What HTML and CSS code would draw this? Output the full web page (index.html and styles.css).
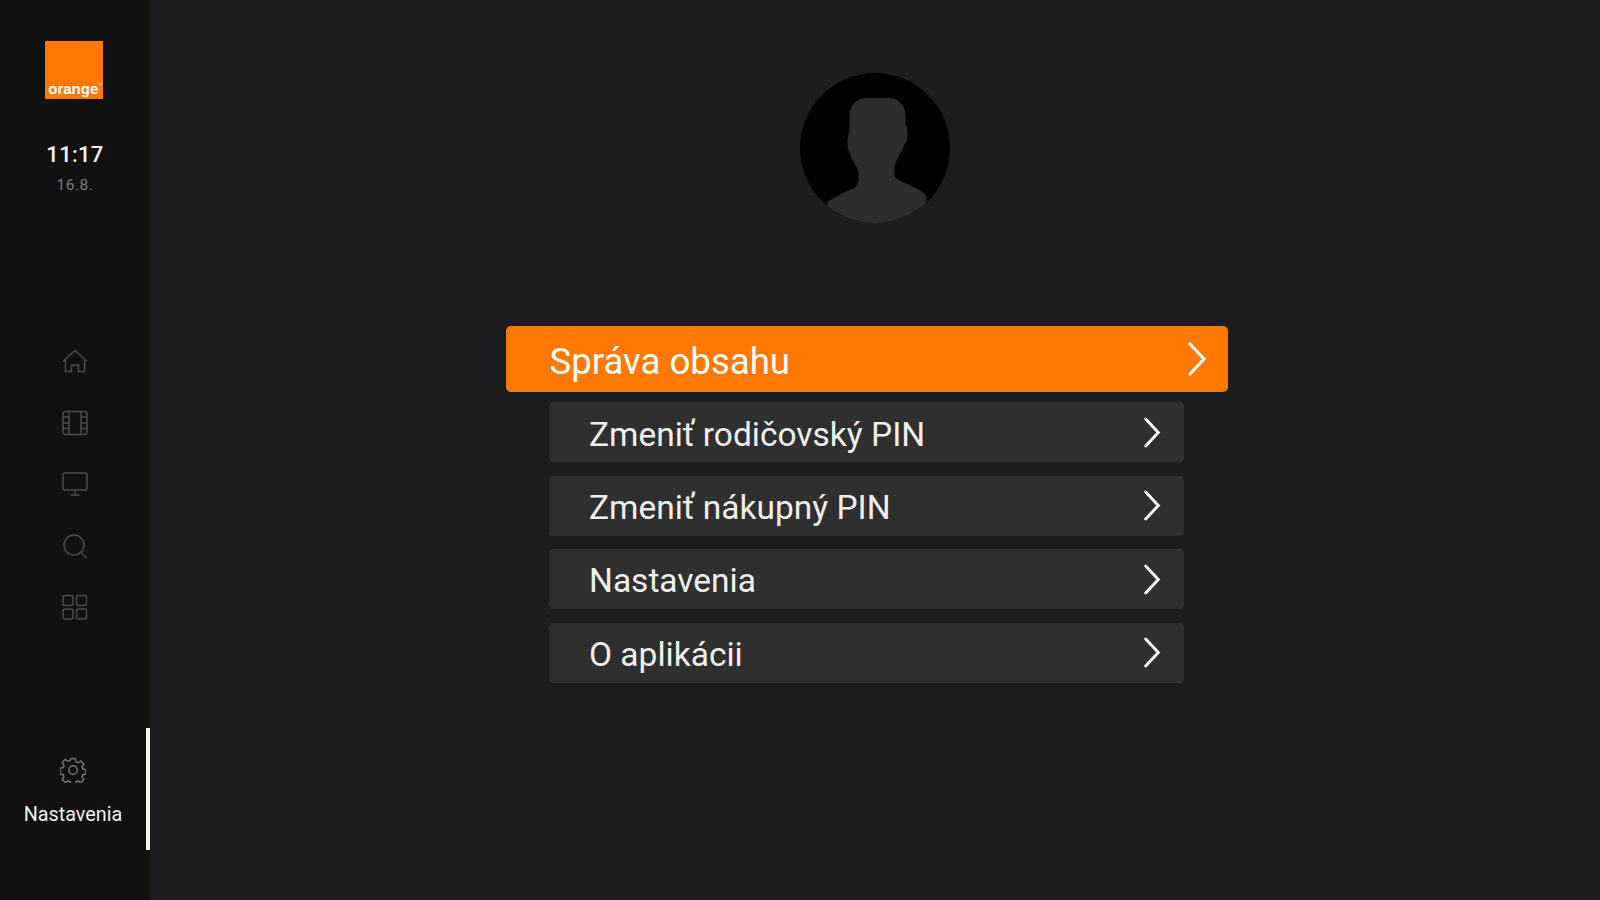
FILE: index.html
```html
<!DOCTYPE html>
<html lang="sk">
<head>
<meta charset="utf-8">
<title>Nastavenia</title>
<link rel="stylesheet" href="styles.css">
</head>
<body>
<div class="app">
  <aside class="sidebar">
    <div class="logo"><span class="logo-word">orange<sup class="tm">™</sup></span></div>
    <div class="time">11:17</div>
    <div class="date">16.8.</div>
    <nav class="nav">
      <svg class="icon" viewBox="0 0 26 26"><path d="M1 12.500 13 1.500l12 11M3.500 11v11.500h6v-6.500h7v6.500h6V11"/></svg>
      <svg class="icon" viewBox="0 0 26 26"><rect x="1" y="1.500" width="24" height="23" rx="2.500"/><path d="M7 1.500v23M19 1.500v23M1 7h6M1 13h6M1 18.500h6M19 7h6M19 13h6M19 18.500h6"/></svg>
      <svg class="icon" viewBox="0 0 26 26"><rect x="1" y="2" width="24" height="17" rx="1.500"/><path d="M13 19v5M8.500 24h9"/></svg>
      <svg class="icon" viewBox="0 0 26 26"><circle cx="12" cy="12" r="10"/><path d="m19.500 20 5 5"/></svg>
      <svg class="icon" viewBox="0 0 26 26"><rect x="1" y="1.500" width="10" height="10" rx="2"/><rect x="14.500" y="1.500" width="10" height="10" rx="2"/><rect x="1" y="15" width="10" height="10" rx="2"/><rect x="14.500" y="15" width="10" height="10" rx="2"/></svg>
    </nav>
    <div class="active-item">
      <svg class="gear" viewBox="0 0 26 26"><circle cx="13" cy="13" r="4.200"/><path d="M10.800 1.500h4.400l.7 3.300 2 .9 2.900-1.800 3 3.100-1.800 2.800.8 2.100 3.200.7v4.400l-3.200.7-.8 2.100 1.800 2.800-3 3.100-2.900-1.800-2 .9-.7 3.200h-4.400l-.7-3.200-2-.9-2.900 1.800-3-3.100 1.800-2.800-.8-2.100-3.200-.7V11.200l3.200-.7.800-2.100-1.800-2.800 3-3.100 2.900 1.800 2-.9z"/></svg>
      <div class="active-label">Nastavenia</div>
    </div>
  </aside>
  <main class="main">
    <svg class="avatar" viewBox="0 0 150 150">
      <defs><clipPath id="avatar-clip"><circle cx="75" cy="75" r="75"/></clipPath></defs>
      <circle cx="75" cy="75" r="75" fill="#000"/>
      <path clip-path="url(#avatar-clip)" fill="#2d2d2d" d="M26.500 130c3-3 9-6 15-9 5-3 11-5 14-7 2-2 3-4 3-8v-6c-1-4-3-8-6-13-2-4-3-7-3-9-1-1-2-4-2-9 0-5 1-8 2-10V42c0-10 8-17 17-17h22c9 0 17 7 17 17v10c2 2 2 5 2 10 0 5-1 8-3 9-1 3-2 6-4 9-3 5-5 9-6 13v7c0 3 1 5 3 6 4 3 12 6 18 9 5 3 9 5 11 8v27H26.500z"/>
    </svg>
    <div class="menu">
      <a class="row row-active"><span class="row-text">Správa obsahu</span><svg class="chev chev-lg" viewBox="0 0 20 34"><path d="m3 2 14 15L3 32"/></svg></a>
      <a class="row"><span class="row-text">Zmeniť rodičovský PIN</span><svg class="chev" viewBox="0 0 20 34"><path d="m3 2 14 15L3 32"/></svg></a>
      <a class="row"><span class="row-text">Zmeniť nákupný PIN</span><svg class="chev" viewBox="0 0 20 34"><path d="m3 2 14 15L3 32"/></svg></a>
      <a class="row"><span class="row-text">Nastavenia</span><svg class="chev" viewBox="0 0 20 34"><path d="m3 2 14 15L3 32"/></svg></a>
      <a class="row"><span class="row-text">O aplikácii</span><svg class="chev" viewBox="0 0 20 34"><path d="m3 2 14 15L3 32"/></svg></a>
    </div>
  </main>
</div>
</body>
</html>
```
FILE: styles.css
```css
* { box-sizing: border-box; }
html, body { margin: 0; height: 100%; }
body {
  background: #1c1d1f;
  color: #fff;
  font-family: Roboto, "Liberation Sans", sans-serif;
  overflow: hidden;
}
.app { display: flex; height: 900px; }
.sidebar {
  width: 150px;
  flex: none;
  background: #111112;
  display: flex;
  flex-direction: column;
  align-items: center;
  padding-top: 41px;
  position: relative;
}
.logo {
  width: 58px;
  height: 58px;
  background: #ff7900;
  margin-left: -1.500px;
  display: flex;
  align-items: flex-end;
  padding: 0 0 2px 3px;
}
.logo-word {
  font-family: "Liberation Sans", sans-serif;
  font-weight: 700;
  font-size: 15px;
  line-height: 16px;
  white-space: nowrap;
  color: #fff;
}
.tm { font-size: 4px; line-height: 0; vertical-align: 8px; font-weight: 400; }
.time {
  margin-top: 42px;
  font-size: 22px;
  line-height: 28px;
  font-weight: 500;
  letter-spacing: 0.300px;
  color: #f2f2f2;
}
.date {
  margin-top: 5px;
  font-size: 15.500px;
  line-height: 22px;
  letter-spacing: 0.500px;
  color: #7c7c7c;
}
.nav {
  margin-top: 153px;
  display: flex;
  flex-direction: column;
  gap: 35.200px;
  align-items: center;
}
.icon { width: 26px; height: 26px; display: block; fill: none; stroke: #4c4c4c; stroke-width: 1.500; }
.active-item {
  position: absolute;
  left: 0;
  right: 0;
  top: 728px;
  height: 122px;
  border-right: 4px solid #f4f4f4;
  display: flex;
  flex-direction: column;
  align-items: center;
  padding-top: 29px;
}
.gear { width: 26px; height: 26px; display: block; fill: none; stroke: #777; stroke-width: 1.400; }
.active-label { margin-top: 19px; font-size: 19.800px; line-height: 26px; color: #efefef; }
.main {
  flex: 1;
  display: flex;
  flex-direction: column;
  align-items: center;
  padding-top: 73px;
}
.avatar { width: 150px; height: 150px; display: block; }
.menu {
  margin-top: 103px;
  margin-left: -17px;
  display: flex;
  flex-direction: column;
  align-items: center;
  gap: 13.400px;
}
.row {
  width: 635px;
  height: 60px;
  background: #2f2f30;
  border-radius: 4px;
  display: flex;
  align-items: center;
  justify-content: space-between;
  padding: 0 23px 0 40px;
  font-size: 33.500px;
  color: #efefef;
}
.row-active {
  width: 722px;
  height: 66px;
  margin-bottom: -3px;
  background: #ff7900;
  border-radius: 5px;
  padding: 0 21px 0 44px;
  font-size: 36.600px;
  color: #fff;
}
.row-text { line-height: 1; padding-top: 4px; }
.row-active .row-text { padding-top: 7px; }
.chev { width: 18px; height: 31px; fill: none; stroke: #fff; stroke-width: 3.200; stroke-linecap: round; }
.chev-lg { width: 20px; height: 34px; }
```
